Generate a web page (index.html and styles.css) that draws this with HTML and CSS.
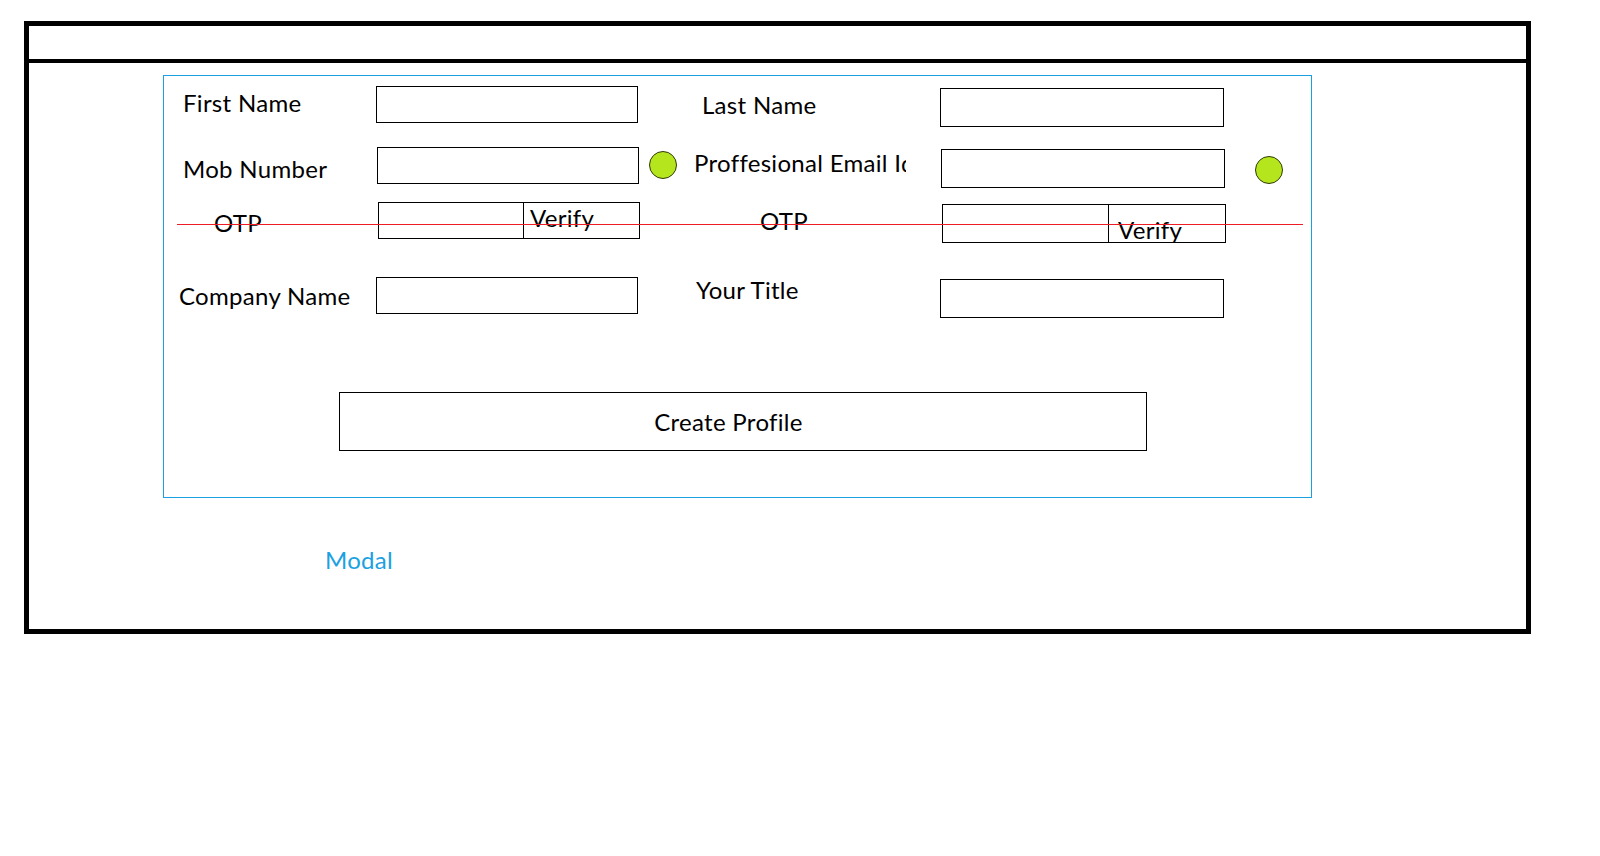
FILE: index.html
```html
<!DOCTYPE html>
<html lang="en">
<head>
<meta charset="utf-8">
<title>Create Profile</title>
<link rel="stylesheet" href="styles.css">
</head>
<body>
<div class="frame">
  <div class="frame-header"></div>
  <div class="frame-body">
    <div class="modal-box">
      <div class="form-grid">
        <div class="label lbl-first">First Name</div>
        <div class="field f-first"></div>
        <div class="spacer"></div>
        <div class="label lbl-last">Last Name</div>
        <div class="field field-wide f-last"></div>
        <div class="spacer"></div>

        <div class="label lbl-mob">Mob Number</div>
        <div class="field f-mob"></div>
        <div class="dot dot-mob"></div>
        <div class="label lbl-email">Proffesional Email Id</div>
        <div class="field field-wide f-email"></div>
        <div class="dot dot-email"></div>

        <div class="label lbl-otp1">OTP</div>
        <div class="otp otp-left">
          <div class="otp-field"></div>
          <div class="otp-verify">Verify</div>
        </div>
        <div class="spacer"></div>
        <div class="label lbl-otp2">OTP</div>
        <div class="otp otp-right">
          <div class="otp-field"></div>
          <div class="otp-verify">Verify</div>
        </div>
        <div class="spacer"></div>

        <div class="label lbl-company">Company Name</div>
        <div class="field f-company"></div>
        <div class="spacer"></div>
        <div class="label lbl-title">Your Title</div>
        <div class="field field-wide f-title"></div>
        <div class="spacer"></div>
      </div>
      <div class="create-btn"><span>Create Profile</span></div>
      <div class="strike"></div>
    </div>
    <div class="modal-caption">Modal</div>
  </div>
</div>
</body>
</html>
```

FILE: styles.css
```css
html, body {
  margin: 0;
  padding: 0;
  background: #ffffff;
}

body {
  font-family: Lato, "Liberation Sans", sans-serif;
  font-size: 24px;
  line-height: 30px;
  letter-spacing: 0.3px;
  color: #000000;
}

.frame {
  box-sizing: border-box;
  width: 1507px;
  height: 613px;
  margin: 21px 0 0 24px;
  border: 5px solid #000000;
}

.frame-header {
  height: 33px;
  border-bottom: 4px solid #000000;
}

.frame-body {
  padding: 12px 0 0 134px;
}

.modal-box {
  position: relative;
  box-sizing: border-box;
  width: 1149px;
  height: 423px;
  border: 1px solid #1ba1e2;
  padding-top: 10px;
}

.form-grid {
  display: grid;
  grid-template-columns: 212px 264px 54px 246px 286px 1fr;
  grid-template-rows: 61px 55px 75px 115px;
  align-items: start;
}

.label {
  white-space: nowrap;
}

.field {
  box-sizing: border-box;
  width: 262px;
  height: 37px;
  border: 1px solid #000000;
}

.field-wide {
  width: 284px;
  height: 39px;
}

/* row 1 */
.lbl-first { margin: 2px 0 0 19px; }
.f-first { margin-top: 0; }
.lbl-last { margin: 4px 0 0 8px; }
.f-last { margin-top: 2px; }

/* row 2 */
.lbl-mob { margin: 7px 0 0 19px; }
.f-mob { margin: 0 0 0 1px; }
.lbl-email {
  margin: 1px 0 0 0;
  width: 212px;
  overflow: hidden;
}
.f-email { margin: 2px 0 0 1px; }

.dot {
  box-sizing: border-box;
  width: 28px;
  height: 28px;
  border-radius: 50%;
  background: #b5e61d;
  border: 1px solid #2f3a0a;
}
.dot-mob { margin: 4px 0 0 9px; }
.dot-email { margin: 9px 0 0 29px; }

/* row 3 */
.lbl-otp1 { margin: 6px 0 0 50px; }
.lbl-otp2 { margin: 4px 0 0 66px; }

.otp {
  box-sizing: border-box;
  display: flex;
  border: 1px solid #000000;
}
.otp-left {
  width: 262px;
  height: 37px;
  margin-left: 2px;
}
.otp-right {
  width: 284px;
  height: 39px;
  margin: 2px 0 0 2px;
}
.otp-field {
  box-sizing: border-box;
  border-right: 1px solid #000000;
}
.otp-left .otp-field { width: 145px; }
.otp-right .otp-field { width: 166px; height: 38px; }
.otp-left .otp-verify { padding-left: 6px; }
.otp-right .otp-verify { padding: 10px 0 0 9px; }

/* row 4 */
.lbl-company { margin: 4px 0 0 15px; }
.lbl-title { margin: -2px 0 0 2px; }
.f-title { margin-top: 2px; }

.create-btn {
  box-sizing: border-box;
  width: 808px;
  height: 59px;
  margin-left: 175px;
  border: 1px solid #000000;
  display: flex;
  align-items: center;
  justify-content: center;
  padding: 1px 29px 0 0;
}

.strike {
  position: absolute;
  left: 13px;
  top: 148px;
  width: 1126px;
  height: 1px;
  background: #ee1c24;
}

.modal-caption {
  margin: 47px 0 0 162px;
  color: #1ba1e2;
}
```
